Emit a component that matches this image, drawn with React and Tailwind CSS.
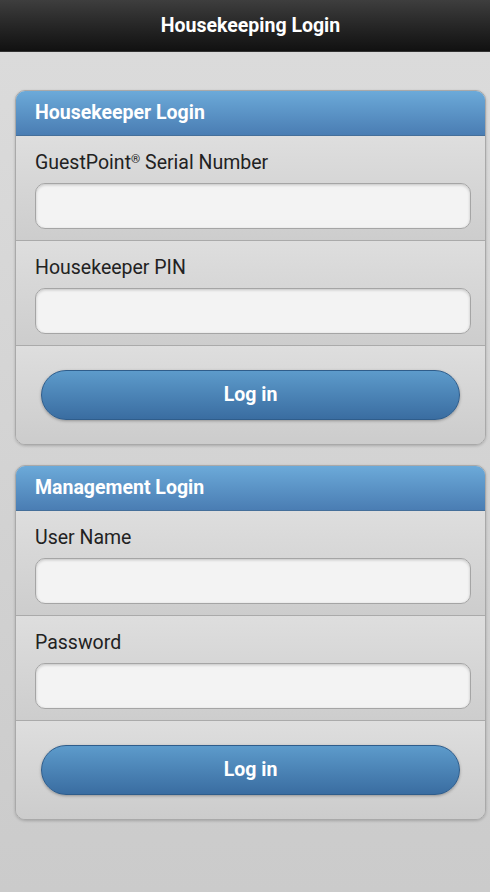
const font = { fontFamily: 'Roboto, "Liberation Sans", sans-serif' }

function Field({ label, type = 'text' }) {
  return (
    <div className="border-b border-[#aaaaaa] bg-gradient-to-b from-[#dedede] to-[#cdcdcd] pl-[19px] pr-[14px] pt-[15px] pb-[11px]">
      <label className="block h-[24px] text-[19.5px] leading-[24px] text-[#222]">{label}</label>
      <input
        type={type}
        className="mt-[8px] block h-[46px] w-full rounded-[10px] border border-[#a5a5a5] bg-[#f3f3f3] shadow-[inset_0_1px_3px_rgba(0,0,0,0.2)] outline-none"
      />
    </div>
  )
}

function LoginCard({ title, fields }) {
  return (
    <div className="overflow-hidden rounded-[10px] border border-[#a9a9a9] shadow-[0_1px_3px_rgba(0,0,0,0.2)]">
      <div className="flex h-[45px] items-center border-b border-[#456f9a] bg-gradient-to-b from-[#6caad9] to-[#4a7db3] px-[19px]">
        <h2 className="text-[19.5px] font-bold text-white">{title}</h2>
      </div>
      {fields.map(([label, type]) => (
        <Field key={label} label={label} type={type} />
      ))}
      <div className="bg-gradient-to-b from-[#dedede] to-[#cccccc] px-[25px] pt-[24px] pb-[24px]">
        <button className="flex h-[50px] w-full items-center justify-center rounded-full border border-[#2f5d8b] bg-gradient-to-b from-[#5d9bcb] to-[#3a6da1] text-[19.5px] font-bold text-white shadow-[0_1px_3px_rgba(0,0,0,0.3)]">
          Log in
        </button>
      </div>
    </div>
  )
}

export default function App() {
  return (
    <div className="min-h-[892px] bg-gradient-to-b from-[#dcdcdc] to-[#cbcbcb]" style={font}>
      <header className="flex h-[52px] items-center justify-center border-b border-[#333] bg-gradient-to-b from-[#3e3e3e] to-[#111111] pl-[11px]">
        <h1 className="text-[19.5px] font-bold text-white">Housekeeping Login</h1>
      </header>
      <main className="flex flex-col gap-[20px] pl-[15px] pr-[4px] pt-[38px]">
        <LoginCard
          title="Housekeeper Login"
          fields={[
            [<>GuestPoint<sup className="text-[0.6em]">®</sup> Serial Number</>, 'text'],
            ['Housekeeper PIN', 'password'],
          ]}
        />
        <LoginCard
          title="Management Login"
          fields={[
            ['User Name', 'text'],
            ['Password', 'password'],
          ]}
        />
      </main>
    </div>
  )
}
